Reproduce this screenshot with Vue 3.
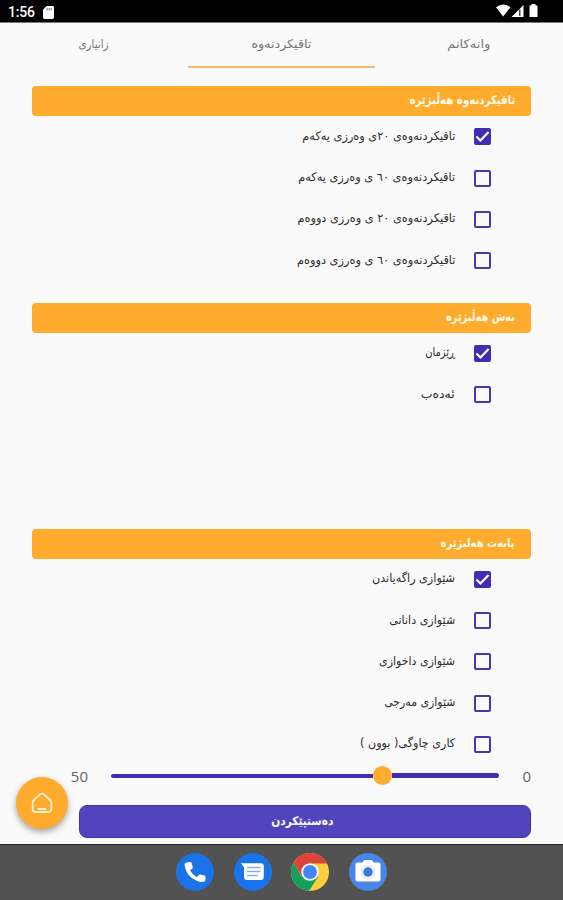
<script setup>
const tabs = [
  { label: 'وانەکانم', width: 43 },
  { label: 'تاقیکردنەوە', width: 60, active: true },
  { label: 'زانیاری', width: 30 },
]

const sections = [
  {
    id: 'exam', title: 'تاقیکردنەوە هەڵبژێرە', width: 106,
    items: [
      { label: 'تاقیکردنەوەی ٢٠ی وەرزی یەکەم', width: 153, checked: true },
      { label: 'تاقیکردنەوەی ٦٠ ی وەرزی یەکەم', width: 157 },
      { label: 'تاقیکردنەوەی ٢٠ ی وەرزی دووەم', width: 158 },
      { label: 'تاقیکردنەوەی ٦٠ ی وەرزی دووەم', width: 158.5 },
    ],
  },
  {
    id: 'part', title: 'بەش هەڵبژێرە', width: 69,
    items: [
      { label: 'ڕێزمان', width: 30, checked: true },
      { label: 'ئەدەب', width: 34 },
    ],
  },
  {
    id: 'topic', title: 'بابەت هەلبژێرە', width: 74,
    items: [
      { label: 'شێوازی راگەیاندن', width: 83, checked: true },
      { label: 'شێوازی دانانی', width: 66 },
      { label: 'شێوازی داخوازی', width: 76 },
      { label: 'شێوازی مەرجی', width: 71 },
      { label: 'کاری چاوگی( بوون )', width: 95 },
    ],
  },
]

// Condenses a label horizontally so it takes up the given width.
const vFit = {
  mounted(el, { value }) {
    const natural = el.getBoundingClientRect().width
    if (natural) el.style.transform = `scaleX(${value / natural})`
  },
}
</script>

<template>
  <div class="screen">
    <header class="status">
      <div class="status-left">
        <span class="clock">1:56</span>
        <svg width="11" height="13" viewBox="0 0 11 13"><path d="M3.6 0H9.6Q11 0 11 1.4V11.6Q11 13 9.6 13H1.4Q0 13 0 11.6V3.8Z" fill="#fff" /><path d="M4.2 2v2.4M6.2 2v2.4M8.2 2v2.4" stroke="#777" stroke-width="1" /></svg>
      </div>
      <svg class="status-right" width="43" height="14" viewBox="0 0 43 14" fill="#fff">
        <path d="M0 3.2Q7.2-2.4 14.4 3.2L7.2 12.6Z" />
        <path d="M15.5 13L27.5 1V13Z" /><path d="M23.8 5.5V12" stroke="#222" stroke-width="1.2" />
        <path d="M35.5 0H39.5V1.4H41.5V13H33.5V1.4H35.5Z" />
      </svg>
    </header>

    <nav class="tabs">
      <div v-for="tab in tabs" :key="tab.label" class="tab" :class="{ active: tab.active }">
        <span v-fit="tab.width" class="tab-label">{{ tab.label }}</span>
      </div>
    </nav>

    <main>
      <section v-for="s in sections" :key="s.id" :class="['section', s.id]">
        <h2><span v-fit="s.width" class="fit">{{ s.title }}</span></h2>
        <div v-for="item in s.items" :key="item.label" class="option">
          <span class="box" :class="{ checked: item.checked }">
            <svg v-if="item.checked" width="17" height="17" viewBox="0 0 17 17"><path d="M2.4 8.6L6.4 12.5L14.6 4" fill="none" stroke="#fff" stroke-width="2.1" /></svg>
          </span>
          <span v-fit="item.width" class="fit label">{{ item.label }}</span>
        </div>
      </section>

      <div class="slider">
        <span class="zero">0</span>
        <div class="track">
          <div class="filled"></div>
          <div class="thumb"></div>
          <div class="rest"></div>
        </div>
        <span class="fifty">50</span>
      </div>
      <div class="start"><span v-fit="62" class="start-label">دەستپێکردن</span></div>
    </main>

    <div class="fab">
      <svg width="22" height="22" viewBox="0 0 22 22" fill="none" stroke="#fff4cf" stroke-width="1.8" stroke-linecap="round" stroke-linejoin="round"><path d="M9.4 2.2Q11 1 12.6 2.2L19 8Q20.3 9.2 20.3 10.7V17.2Q20.3 20 17.5 20H4.5Q1.7 20 1.7 17.2V10.7Q1.7 9.2 3 8Z" /><path d="M7.5 17H14.5" /></svg>
    </div>

    <footer class="dock">
      <svg viewBox="0 0 38 38"><circle cx="19" cy="19" r="19" fill="#1a73e8" /><path d="M10.2 9.4Q8.2 10 8.6 12.2Q10.6 25.4 24.6 28.9Q29 29.8 29.5 27V23.8Q29.5 22.7 28.4 22.4L24.6 21.5Q23.6 21.3 22.9 22L20.6 24Q16.5 21.8 14.1 17.6L16.3 15.4Q17 14.7 16.7 13.7L15.7 10.2Q15.4 9.1 14.4 9.1Z" fill="#fff" /></svg>
      <svg viewBox="0 0 38 38"><circle cx="19" cy="19" r="19" fill="#1a73e8" /><path d="M7 10.2H26.8Q29.8 10.2 29.8 13.2V24Q29.8 27 26.8 27H13Q10 27 10 24V14.4Z" fill="#fff" /><path d="M13 14.5H26.5M13 18.5H26.5M13 22.5H23.5" stroke="#7fafec" stroke-width="1.5" /></svg>
      <svg viewBox="0 0 38 38"><circle cx="19" cy="19" r="19" fill="#ffcd40" /><path d="M19 19L10.5 23.7L2.6 9.5A19 19 0 0 0 18 38L27 24Z" fill="#159f5c" /><path d="M19 10.5H36A19 19 0 0 0 2.6 9.5L10.8 23.7Z" fill="#db4437" /><circle cx="19" cy="19" r="8.8" fill="#f4f5f7" /><circle cx="19" cy="19" r="6.9" fill="#4285f4" /></svg>
      <svg viewBox="0 0 38 38"><circle cx="19" cy="19" r="19" fill="#4a86e8" /><path d="M8.5 9.6H13.3L15.3 7H22.7L24.7 9.6H29.5Q31.5 9.6 31.5 11.6V26.5Q31.5 28.5 29.5 28.5H8.5Q6.5 28.5 6.5 26.5V11.6Q6.5 9.6 8.5 9.6Z" fill="#fff" /><circle cx="19" cy="19" r="7.5" fill="#eceff1" /><circle cx="19" cy="19" r="4.7" fill="#3c78dc" /></svg>
    </footer>
  </div>
</template>

<style>
body { margin: 0; background: #fafafa; }
</style>

<style scoped>
* { box-sizing: border-box; }
svg { display: block; flex: none; }
.screen { position: relative; width: 563px; height: 900px; overflow: hidden; display: flex; flex-direction: column; background: #fafafa; direction: rtl; font-family: "DejaVu Sans", sans-serif; }
.status { height: 23px; flex: none; direction: ltr; display: flex; justify-content: space-between; align-items: flex-start; padding: 4px 24px 0 8px; background: #000; border-bottom: 1px solid #777; }
.status-left { display: flex; gap: 8px; align-items: center; height: 16px; }
.clock { color: #fff; font: 500 14px/16px Roboto, sans-serif; letter-spacing: -0.2px; }
.tabs { height: 45px; flex: none; display: grid; grid-template-columns: repeat(3, 1fr); }
.tab { display: flex; justify-content: center; padding-top: 11px; font-size: 12px; line-height: 20px; color: #757575; border-bottom: 2px solid transparent; }
.tab.active { border-color: #ffb867; }
.tab-label, .start-label { white-space: nowrap; transform-origin: center; height: 20px; }
main { flex: 1; display: flex; flex-direction: column; padding: 18.4px 32px 0; }
.section { flex: none; }
.exam { height: 216.5px; }
.part { height: 226px; }
.topic { height: 236px; }
h2 { margin: 0; height: 30px; display: flex; padding: 4px 16px 0 0; background: #ffab2e; border-radius: 4px; color: #fffbe9; font-size: 12px; line-height: 20px; font-weight: 700; }
.fit { white-space: nowrap; transform-origin: right; height: 20px; }
.option { height: 41.2px; display: flex; align-items: center; gap: 19px; padding-right: 40px; font-size: 12px; line-height: 20px; color: #2c2c2c; }
.label { margin-top: -2px; }
.box { width: 17px; height: 17px; flex: none; border: 2px solid #4a35b5; border-radius: 2px; }
.box.checked { border: 0; background: #432cb3; }
.slider { height: 22px; flex: none; display: flex; align-items: center; color: #616161; font: 15px/22px "Open Sans", sans-serif; }
.zero { width: 32px; }
.track { width: 388px; flex: none; display: flex; align-items: center; }
.filled { width: 107px; height: 5px; background: #432cb3; border-radius: 0 3px 3px 0; }
.thumb { width: 19px; height: 19px; border-radius: 50%; background: #ffab2e; }
.rest { flex: 1; height: 4px; background: #432cb3; border-radius: 2px 0 0 2px; }
.fifty { margin-right: 23px; }
.start { width: 452px; height: 33px; flex: none; margin-top: 18px; border-radius: 8px; border: 1px solid #4532b3; background: #5145be; color: #fff; display: flex; justify-content: center; padding: 5px 6px 0 0; font-size: 12px; line-height: 20px; font-weight: 700; }
.fab { position: absolute; left: 16px; top: 777px; width: 52px; height: 52px; border-radius: 50%; background: #ffab2e; box-shadow: 0 3px 6px rgba(0, 0, 0, 0.35); display: flex; align-items: center; justify-content: center; }
.dock { height: 56px; flex: none; direction: ltr; display: flex; justify-content: center; gap: 19.5px; padding-top: 8px; background: #525252; border-top: 1px solid #272727; }
.dock svg { width: 38px; height: 38px; }
</style>
